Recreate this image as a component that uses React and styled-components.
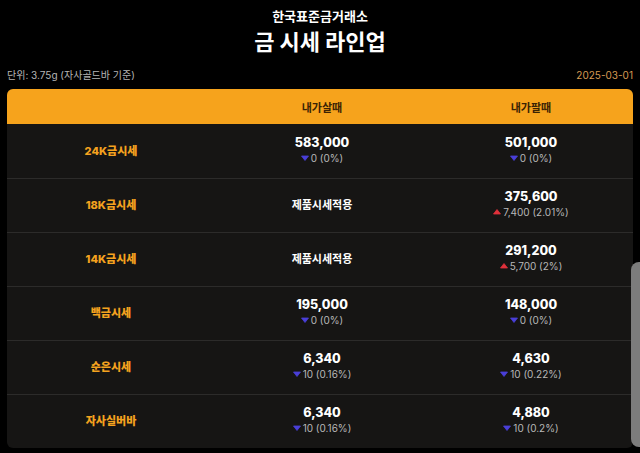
import React from "react";
import styled, { createGlobalStyle } from "styled-components";

const Global = createGlobalStyle`
  body {
    margin: 0;
    background: #000;
    font-family: Inter, "Noto Sans CJK KR", sans-serif;
  }
`;

const Page = styled.div`
  position: relative;
  width: 640px;
  height: 453px;
  overflow: hidden;
  background: #000;
  padding: 0 7px;
  box-sizing: border-box;
`;

const Heading = styled.header`
  display: flex;
  flex-direction: column;
  align-items: center;
  padding-top: 7px;
`;

const Brand = styled.div`
  color: #fff;
  font-size: 13px;
  font-weight: 700;
  line-height: 18px;
  font-family: "Noto Sans CJK KR", sans-serif;
`;

const Title = styled.h1`
  margin: 0;
  color: #fff;
  font-size: 22px;
  font-weight: 700;
  line-height: 30px;
  font-family: "Noto Sans CJK KR", sans-serif;
`;

const Meta = styled.div`
  display: flex;
  justify-content: space-between;
  align-items: center;
  margin-top: 13px;
  font-size: 10px;
  line-height: 14px;
`;

const Unit = styled.span`
  color: #b5b5b5;
`;

const DateText = styled.span`
  color: #d69a52;
`;

const Card = styled.div`
  margin-top: 7px;
  background: #161514;
  border-radius: 6px;
  overflow: hidden;
`;

const Row = styled.div`
  display: grid;
  grid-template-columns: 208px 214px 1fr;
  align-items: center;
  height: ${(p) => (p.$head ? "35px" : "53px")};
  background: ${(p) => (p.$head ? "#f6a31c" : "transparent")};
  border-top: ${(p) => (p.$first || p.$head ? "none" : "1px solid #2c2b2a")};
  padding-top: ${(p) => (p.$first ? "1px" : "0")};
`;

const HeadCell = styled.div`
  text-align: center;
  font-size: 11px;
  font-weight: 700;
  color: #3a2204;
  font-family: "Noto Sans CJK KR", sans-serif;
`;

const Label = styled.div`
  text-align: center;
  color: #f4a21f;
  font-size: 11px;
  font-weight: 800;
  font-family: Inter, "Noto Sans CJK KR", sans-serif;
  margin-top: -3px;
`;

const Cell = styled.div`
  display: flex;
  flex-direction: column;
  align-items: center;
  margin-top: -4px;
`;

const Price = styled.div`
  color: #fff;
  font-size: 12.5px;
  font-weight: 800;
  line-height: 16px;
`;

const Note = styled.div`
  color: #fff;
  font-size: 11px;
  font-weight: 700;
  font-family: "Noto Sans CJK KR", sans-serif;
`;

const Change = styled.div`
  display: flex;
  align-items: center;
  gap: 2px;
  color: #b8b8b8;
  font-size: 10px;
  line-height: 14px;
`;

const EdgeHandle = styled.div`
  position: absolute;
  right: 0;
  top: 262px;
  width: 9px;
  height: 185px;
  background: #7c7c7c;
  border-radius: 8px 0 0 8px;
`;

const Arrow = ({ up }) => (
  <svg width="8" height="6" viewBox="0 0 8 6">
    {up ? (
      <path d="M4 0.5 L7.5 5 L0.5 5 Z" fill="#e0313b" strokeLinejoin="round" stroke="#e0313b" strokeWidth="0.8" />
    ) : (
      <path d="M0.5 1 L7.5 1 L4 5.5 Z" fill="#4a3fd8" strokeLinejoin="round" stroke="#4a3fd8" strokeWidth="0.8" />
    )}
  </svg>
);

const Quote = ({ price, diff, up }) => (
  <Cell>
    <Price>{price}</Price>
    <Change>
      <Arrow up={up} />
      {diff}
    </Change>
  </Cell>
);

const rows = [
  { name: "24K금시세", buy: ["583,000", "0 (0%)"], sell: ["501,000", "0 (0%)"] },
  { name: "18K금시세", buy: null, sell: ["375,600", "7,400 (2.01%)", true] },
  { name: "14K금시세", buy: null, sell: ["291,200", "5,700 (2%)", true] },
  { name: "백금시세", buy: ["195,000", "0 (0%)"], sell: ["148,000", "0 (0%)"] },
  { name: "순은시세", buy: ["6,340", "10 (0.16%)"], sell: ["4,630", "10 (0.22%)"] },
  { name: "자사실버바", buy: ["6,340", "10 (0.16%)"], sell: ["4,880", "10 (0.2%)"] },
];

export default function App() {
  return (
    <Page>
      <Global />
      <Heading>
        <Brand>한국표준금거래소</Brand>
        <Title>금 시세 라인업</Title>
      </Heading>
      <Meta>
        <Unit>단위: 3.75g (자사골드바 기준)</Unit>
        <DateText>2025-03-01</DateText>
      </Meta>
      <Card>
        <Row $head>
          <HeadCell />
          <HeadCell>내가살때</HeadCell>
          <HeadCell>내가팔때</HeadCell>
        </Row>
        {rows.map((r, i) => (
          <Row key={r.name} $first={i === 0}>
            <Label>{r.name}</Label>
            {r.buy ? (
              <Quote price={r.buy[0]} diff={r.buy[1]} up={r.buy[2]} />
            ) : (
              <Cell>
                <Note>제품시세적용</Note>
              </Cell>
            )}
            <Quote price={r.sell[0]} diff={r.sell[1]} up={r.sell[2]} />
          </Row>
        ))}
      </Card>
      <EdgeHandle />
    </Page>
  );
}
